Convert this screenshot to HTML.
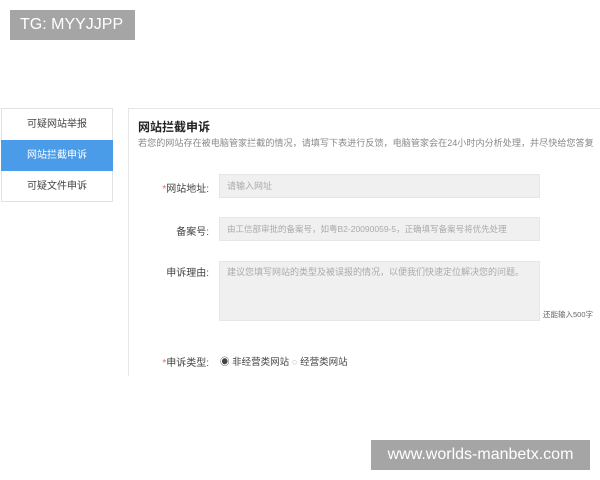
<!DOCTYPE html>
<html><head><meta charset="utf-8"><style>
*{margin:0;padding:0;box-sizing:border-box}
body{width:600px;height:480px;background:#fff;position:relative;overflow:hidden;font-family:"Liberation Sans","Noto Sans CJK SC",sans-serif;color:#333}
.a{position:absolute}
.tg{left:10px;top:10px;width:125px;height:30px;background:#a5a5a5;color:#fff;font-size:16px;line-height:30px;padding-left:10px}
.wm{left:371px;top:440px;width:219px;height:30px;background:#a5a5a5;color:#fff;font-size:16px;line-height:30px;text-align:center}
.side{left:1px;top:108px;width:112px;height:94px;border:1px solid #e3e3e3}
.side div{height:31px;line-height:31px;text-align:center;font-size:10px;color:#444}
.side .on{background:#4a9be8;color:#fff;margin:0 -1px}
.main{left:128px;top:108px;width:480px;height:268px;border-left:1px solid #e6e6e6;border-top:1px solid #e6e6e6}
.lbl{font-size:10px;color:#444;text-align:right;width:80px;left:129px}
.in{left:219px;width:321px;background:#f0f0f0;border:1px solid #e6e6e6;font-size:9px;color:#aaa;padding-left:7px;white-space:nowrap;overflow:hidden}
</style></head><body>
<div class="a tg">TG: MYYJJPP</div>
<div class="a side"><div>可疑网站举报</div><div class="on">网站拦截申诉</div><div>可疑文件申诉</div></div>
<div class="a main"></div>
<div class="a" style="left:138px;top:118px;font-size:12px;font-weight:bold;color:#222">网站拦截申诉</div>
<div class="a" style="left:138px;top:135px;font-size:9.1px;color:#888;white-space:nowrap">若您的网站存在被电脑管家拦截的情况，请填写下表进行反馈，电脑管家会在24小时内分析处理，并尽快给您答复</div>
<div class="a lbl" style="top:180px"><span style="color:#e66">*</span>网站地址:</div>
<div class="a in" style="top:174px;height:24px;line-height:22px">请输入网址</div>
<div class="a lbl" style="top:223px">备案号:</div>
<div class="a in" style="top:217px;height:24px;line-height:22px;font-size:8.5px">由工信部审批的备案号，如粤B2-20090059-5，正确填写备案号将优先处理</div>
<div class="a lbl" style="top:264px">申诉理由:</div>
<div class="a in" style="top:261px;height:60px;padding-top:3px">建议您填写网站的类型及被误报的情况，以便我们快速定位解决您的问题。</div>
<div class="a" style="left:543px;top:309px;font-size:7.5px;color:#666">还能输入500字</div>
<div class="a lbl" style="top:354px"><span style="color:#e66">*</span>申诉类型:</div>
<div class="a" style="left:220px;top:354px;font-size:9.5px;color:#444;white-space:nowrap">◉ 非经营类网站 <span style="color:#bbb">○</span> 经营类网站</div>
<div class="a wm">www.worlds-manbetx.com</div>
</body></html>
